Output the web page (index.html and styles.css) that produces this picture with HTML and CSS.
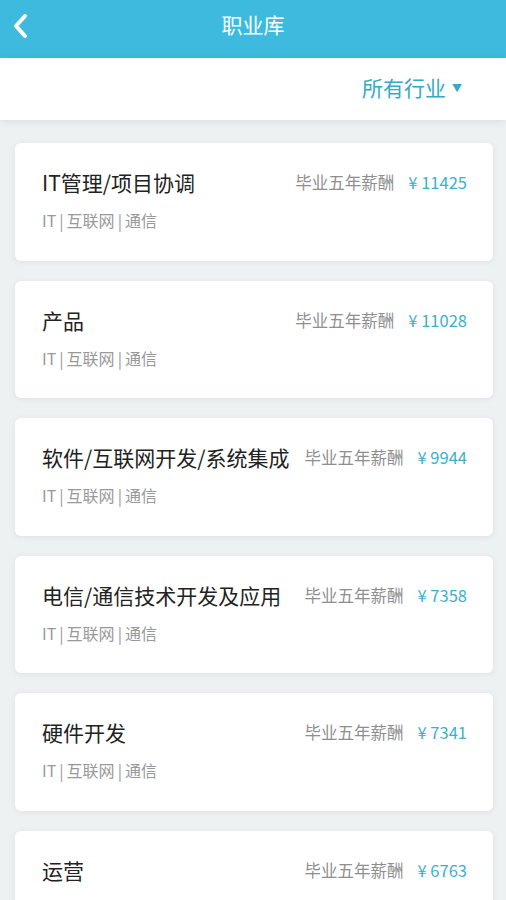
FILE: index.html
```html
<!DOCTYPE html>
<html lang="zh-CN">
<head>
  <meta charset="UTF-8" />
  <title>职业库</title>
  <meta name="viewport" content="width=device-width, initial-scale=1.0" />
  <link rel="stylesheet" href="styles.css">
</head>
<body>
  <div class="header">
    <span class="back">
      <svg width="16" height="26" viewBox="0 0 16 26">
        <path d="M13 3 L4 13 L13 23" fill="none" stroke="#fff" stroke-width="4" stroke-linecap="round" stroke-linejoin="round"/>
      </svg>
    </span>
    <h1>职业库</h1>
  </div>

  <div class="filter-bar">
    <span class="filter">所有行业<span class="arrow">▼</span></span>
  </div>

  <div class="list">
    <div class="card">
      <div class="row">
        <span class="name">IT管理/项目协调</span>
        <span class="salary">毕业五年薪酬<span class="amount">¥ 11425</span></span>
      </div>
      <div class="tags">IT<span class="sep">|</span>互联网<span class="sep">|</span>通信</div>
    </div>

    <div class="card">
      <div class="row">
        <span class="name">产品</span>
        <span class="salary">毕业五年薪酬<span class="amount">¥ 11028</span></span>
      </div>
      <div class="tags">IT<span class="sep">|</span>互联网<span class="sep">|</span>通信</div>
    </div>

    <div class="card">
      <div class="row">
        <span class="name">软件/互联网开发/系统集成</span>
        <span class="salary">毕业五年薪酬<span class="amount">¥ 9944</span></span>
      </div>
      <div class="tags">IT<span class="sep">|</span>互联网<span class="sep">|</span>通信</div>
    </div>

    <div class="card">
      <div class="row">
        <span class="name">电信/通信技术开发及应用</span>
        <span class="salary">毕业五年薪酬<span class="amount">¥ 7358</span></span>
      </div>
      <div class="tags">IT<span class="sep">|</span>互联网<span class="sep">|</span>通信</div>
    </div>

    <div class="card">
      <div class="row">
        <span class="name">硬件开发</span>
        <span class="salary">毕业五年薪酬<span class="amount">¥ 7341</span></span>
      </div>
      <div class="tags">IT<span class="sep">|</span>互联网<span class="sep">|</span>通信</div>
    </div>

    <div class="card">
      <div class="row">
        <span class="name">运营</span>
        <span class="salary">毕业五年薪酬<span class="amount">¥ 6763</span></span>
      </div>
      <div class="tags">IT<span class="sep">|</span>互联网<span class="sep">|</span>通信</div>
    </div>
  </div>
</body>
</html>
```

FILE: styles.css
```css
body {
  margin: 0;
  font-family: "Noto Sans CJK SC", "Noto Sans", sans-serif;
  background-color: #eef1f1;
  overflow: hidden;
}

.header {
  position: relative;
  height: 56px;
  background-color: #3dbade;
  border-bottom: 2px solid #33c2cc;
  display: flex;
  align-items: center;
  justify-content: center;
}

.header h1 {
  margin: 0;
  color: #fff;
  font-size: 21px;
  font-weight: normal;
  margin-top: -9px;
}

.back {
  position: absolute;
  left: 12px;
  top: 13px;
}

.filter-bar {
  background: #fff;
  height: 62px;
  display: flex;
  align-items: center;
  justify-content: flex-end;
  padding-right: 44px;
  box-shadow: 0 2px 8px rgba(0,0,0,0.08);
  position: relative;
}

.filter {
  color: #36a9c6;
  font-size: 21px;
  margin-top: -4px;
}

.arrow {
  font-size: 10px;
  vertical-align: 4px;
  margin-left: 6px;
}

.list {
  padding: 23px 13px 0 15px;
  display: flex;
  flex-direction: column;
  gap: 20px;
}

.card {
  background: #fff;
  border-radius: 6px;
  box-shadow: 0 1px 6px rgba(0,0,0,0.07);
  height: 117.6px;
  flex-shrink: 0;
  box-sizing: border-box;
  padding: 24px 26px 0 27px;
}

.row {
  display: flex;
  justify-content: space-between;
  align-items: center;
  height: 30px;
}

.name {
  color: #222;
  font-size: 21px;
  white-space: nowrap;
}

.salary {
  color: #8f8f8f;
  font-size: 16.5px;
  white-space: nowrap;
}

.amount {
  color: #3bb0cc;
  margin-left: 14px;
}

.tags {
  margin-top: 11px;
  color: #999;
  font-size: 16px;
}

.sep {
  margin: 0 3px;
}
```
